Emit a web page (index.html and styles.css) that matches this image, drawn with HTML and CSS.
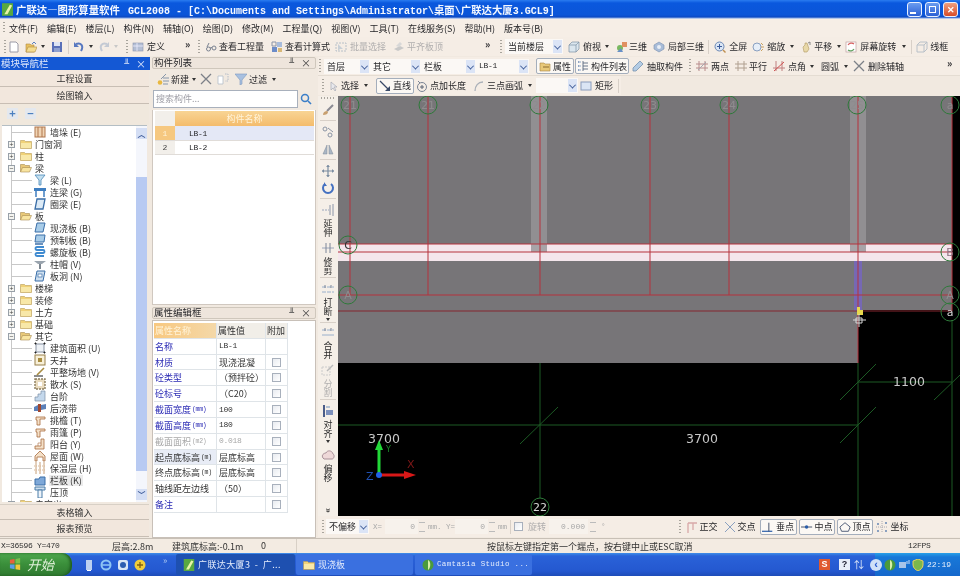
FILE: index.html
```html
<!DOCTYPE html>
<html lang="zh-CN">
<head>
<meta charset="utf-8">
<title>广联达—图形算量软件</title>
<link rel="stylesheet" href="styles.css">
</head>
<body>
<svg class="defs" xmlns="http://www.w3.org/2000/svg">
<symbol id="new" viewBox="0 0 12 12"><path d="M2 1h6l2 2v8H2z" fill="#fff" stroke="#9a9aa6"/></symbol>
<symbol id="open" viewBox="0 0 12 12"><path d="M1 3h4l1 1h3v7H1z" fill="#e8c060" stroke="#b08a40" stroke-width=".6"/><path d="M3 6h9l-2 5H1z" fill="#f4dc90" stroke="#b08a40" stroke-width=".6"/><path d="M7 3l2-2 2 2" fill="none" stroke="#5a80c0"/></symbol>
<symbol id="save" viewBox="0 0 12 12"><rect x="1" y="1" width="10" height="10" fill="#5a70b8"/><rect x="3" y="1" width="6" height="4" fill="#dde4f4"/><rect x="3" y="7" width="6" height="4" fill="#8ea0d0"/></symbol>
<symbol id="undo" viewBox="0 0 12 12"><path d="M3 3c5-2 8 2 5 7" fill="none" stroke="#5878c0" stroke-width="2"/><path d="M1 1v5h5z" fill="#5878c0"/></symbol>
<symbol id="redo" viewBox="0 0 12 12"><path d="M9 3C4 1 1 5 4 10" fill="none" stroke="#c4cad4" stroke-width="2"/><path d="M11 1v5H6z" fill="#c4cad4"/></symbol>
<symbol id="def" viewBox="0 0 12 12"><rect x="1" y="2" width="10" height="8" fill="#b4bed4" stroke="#8a94ac" stroke-width=".6"/><path d="M1 5h10M5 2v8" stroke="#eef" stroke-width=".8"/></symbol>
<symbol id="new2" viewBox="0 0 12 12"><circle cx="3" cy="9.500" r="2.300" fill="#e8b840"/><path d="M4 6l5-5M6 5h6M6 8h6M6 11h5" stroke="#7c8ca4" stroke-width=".9"/></symbol>
<symbol id="copy" viewBox="0 0 12 12"><path d="M1 3h5v8H1z" fill="#fff" stroke="#b4bcc8" stroke-width=".8"/><path d="M8 1h3v7H8" fill="none" stroke="#b4bcc8" stroke-dasharray="1.500 1"/></symbol>
<symbol id="glass" viewBox="0 0 12 12"><circle cx="3.500" cy="8" r="2" fill="none" stroke="#7a8290"/><circle cx="9" cy="7" r="2" fill="none" stroke="#7a8290"/><path d="M5 7l2-.5M2 6l2-4" stroke="#7a8290"/></symbol>
<symbol id="calc" viewBox="0 0 12 12"><rect x="1" y="6" width="5" height="5" fill="#6c8cc8"/><rect x="6" y="1" width="5" height="5" fill="#a8bcdc"/><rect x="7" y="7" width="4" height="4" fill="#d8b878"/><path d="M1 1h4v4H1z" fill="none" stroke="#8a94a8"/></symbol>
<symbol id="batch" viewBox="0 0 12 12"><path d="M1 2h10v8H1z" fill="none" stroke="#b8c0c8" stroke-dasharray="2 1"/><path d="M3 3l5 5H5l-2 2z" fill="#c8cfd6"/></symbol>
<symbol id="flat" viewBox="0 0 12 12"><path d="M1 8l6-3 4 2-6 3z" fill="#c8c8c8"/><path d="M3 5l4-4 2 2-3 3z" fill="#d8d8d8"/></symbol>
<symbol id="cube" viewBox="0 0 12 12"><path d="M1 4l3-3h7v7l-3 3H1z" fill="#dbe6ee" stroke="#7c90a4" stroke-width=".7"/><path d="M1 4h7v7M8 4l3-3" fill="none" stroke="#7c90a4" stroke-width=".7"/></symbol>
<symbol id="tri" viewBox="0 0 12 12"><circle cx="4" cy="7" r="3" fill="#7ab860"/><path d="M6 1h5v5H6z" fill="#e09060"/><path d="M1 11l4-4 2 4z" fill="#6890c8"/></symbol>
<symbol id="local" viewBox="0 0 12 12"><path d="M6 1l5 3v4l-5 3-5-3V4z" fill="#a8bcd8" stroke="#7a90b0" stroke-width=".6"/><circle cx="6" cy="6" r="2" fill="#e8eef6"/></symbol>
<symbol id="fit" viewBox="0 0 12 12"><circle cx="5.500" cy="5.500" r="4.500" fill="#dbe6f4" stroke="#6c88b4"/><path d="M5.500 3v5M3 5.500h5" stroke="#3c5c9c"/><path d="M9 9l2.500 2.500" stroke="#c09050" stroke-width="1.400"/></symbol>
<symbol id="zoom" viewBox="0 0 12 12"><circle cx="5" cy="6" r="4" fill="#e6eef8" stroke="#8aa0c0"/><path d="M9 2l2 2M9 6h3M9 10l2-2" stroke="#c8a060"/></symbol>
<symbol id="pan" viewBox="0 0 12 12"><path d="M3 6l2-2v-2l2 0 1 3 1 3-2 3H4z" fill="#e8d8a8" stroke="#b09860" stroke-width=".6"/><path d="M8 2l2-1v3" fill="none" stroke="#8a8a8a"/></symbol>
<symbol id="rot" viewBox="0 0 12 12"><rect x="1" y="1" width="10" height="10" fill="#fff" stroke="#c0a0a0" stroke-width=".7"/><path d="M3 4a4 4 0 016-1" fill="none" stroke="#d86060" stroke-width="1.200"/><path d="M9 8a4 4 0 01-6 1" fill="none" stroke="#60a060" stroke-width="1.200"/></symbol>
<symbol id="wire" viewBox="0 0 12 12"><path d="M1 4l3-3h7v7l-3 3H1zM1 4h7v7M8 4l3-3" fill="none" stroke="#b8c0c8"/></symbol>
<symbol id="prop" viewBox="0 0 12 12"><path d="M1 3h4l1 1h5v7H1z" fill="#e8c878" stroke="#a88440" stroke-width=".6"/><path d="M4 7h6" stroke="#8a6a30"/></symbol>
<symbol id="list" viewBox="0 0 12 12"><path d="M1 2h3M1 6h3M1 10h3" stroke="#6c88b4" stroke-width="1.500" stroke-dasharray="1 .5"/><path d="M6 1v10M6 3h5M6 6h5M6 9h5" stroke="#5a6a80" stroke-width=".9"/></symbol>
<symbol id="pick" viewBox="0 0 12 12"><path d="M8 1l3 3-7 7H1V8z" fill="#b4cce4" stroke="#6a88a8" stroke-width=".7"/></symbol>
<symbol id="twop" viewBox="0 0 12 12"><path d="M3 1v10M9 1v10M0 4h12M0 8h12" stroke="#b88c8c"/><path d="M2 10l8-8" stroke="#a8a8b0"/></symbol>
<symbol id="par" viewBox="0 0 12 12"><path d="M3 1v10M9 1v10M0 4h12M0 8h12" stroke="#b0a090"/></symbol>
<symbol id="ang" viewBox="0 0 12 12"><path d="M3 1v10M9 1v10M0 8h12" stroke="#c08080"/><path d="M1 11L11 2" stroke="#d05050"/></symbol>
<symbol id="x" viewBox="0 0 12 12"><path d="M1 1l10 10M11 1L1 11" stroke="#7c8088" stroke-width="1.300"/></symbol>
<symbol id="sel" viewBox="0 0 12 12"><path d="M3 2v8l2-2 2 3 1-1-2-3h3z" fill="#e8e8ec" stroke="#a8aab4" stroke-width=".7"/></symbol>
<symbol id="line" viewBox="0 0 12 12"><path d="M1 1l9 9" stroke="#3a4a68" stroke-width="1.200"/><path d="M11 11H6l5-5z" fill="#3a4a68"/></symbol>
<symbol id="ptlen" viewBox="0 0 12 12"><circle cx="6" cy="7" r="4.500" fill="none" stroke="#7a8494"/><path d="M6 5v4M4 7h4" stroke="#5a6474"/><path d="M2 1l2 2" stroke="#7a8494"/></symbol>
<symbol id="arc" viewBox="0 0 12 12"><path d="M2 11C2 6 5 2 10 2" fill="none" stroke="#aab0b8" stroke-width="1.300"/></symbol>
<symbol id="rect" viewBox="0 0 12 12"><rect x="1" y="2" width="10" height="8" fill="#dbe5f4" stroke="#8a9cbc"/></symbol>
<symbol id="brush" viewBox="0 0 12 12"><path d="M11 1L5 7" stroke="#8a8a92" stroke-width="2"/><path d="M1 11c0-3 2-4 4-4l1 1c0 2-2 3-5 3z" fill="#c8a070"/></symbol>
<symbol id="sci" viewBox="0 0 12 12"><circle cx="3" cy="3" r="2" fill="none" stroke="#8a94a4"/><circle cx="8" cy="9" r="2" fill="none" stroke="#8a94a4"/><path d="M6 2l5 4" stroke="#8a94a4"/></symbol>
<symbol id="mir" viewBox="0 0 12 12"><path d="M5 2L1 11h4zM7 2l4 9H7z" fill="#aab6c4" stroke="#7c8898" stroke-width=".5"/></symbol>
<symbol id="move" viewBox="0 0 12 12"><path d="M6 0v12M0 6h12" stroke="#7a8ca0" stroke-width="1.200"/><path d="M4 2l2-2 2 2zM4 10l2 2 2-2zM2 4L0 6l2 2zM10 4l2 2-2 2z" fill="#7a8ca0"/></symbol>
<symbol id="rotv" viewBox="0 0 12 12"><path d="M3 2a5 5 0 106 0" fill="none" stroke="#4470c0" stroke-width="2"/><path d="M2 0v4h3z" fill="#4470c0"/></symbol>
<symbol id="ext" viewBox="0 0 14 12"><path d="M1 6h7" stroke="#9aa6bc" stroke-width="1" stroke-dasharray="2 1"/><path d="M9 1v10M12 0v12" stroke="#8a94a8"/></symbol>
<symbol id="trim" viewBox="0 0 14 12"><path d="M1 6h12" stroke="#9aa6bc"/><path d="M5 1v10M9 1v10" stroke="#7c8698"/></symbol>
<symbol id="brk" viewBox="0 0 14 12"><path d="M1 4h12M1 9h12" stroke="#9ab0cc" stroke-dasharray="4 1"/><path d="M4 2v3M10 2v3" stroke="#7c8698"/></symbol>
<symbol id="mrg" viewBox="0 0 14 12"><path d="M1 9h12" stroke="#9ab0cc"/><path d="M1 4h12" stroke="#9ab0cc" stroke-dasharray="4 1"/><path d="M4 2v3M10 2v3" stroke="#7c8698"/></symbol>
<symbol id="spl" viewBox="0 0 14 12"><path d="M1 3h8v8H1z" fill="none" stroke="#ccc" stroke-dasharray="2 1"/><path d="M12 1L6 7" stroke="#bbb" stroke-width="1.500"/></symbol>
<symbol id="alg" viewBox="0 0 12 12"><path d="M2 0v12" stroke="#4a5c88" stroke-width="2"/><path d="M4 5h7v5H4z" fill="#7c90bc"/><path d="M4 2h4" stroke="#9ab0cc" stroke-width="1.500"/></symbol>
<symbol id="off" viewBox="0 0 14 12"><path d="M2 9c-2-3 1-5 3-5 1-3 6-3 7 1 2 1 1 5-1 5H3z" fill="#eed8d8" stroke="#a89098"/></symbol>
<symbol id="ortho" viewBox="0 0 12 12"><path d="M2 2v10M2 2h9M7 2v7" stroke="#d8a8a8" stroke-width="1.300"/></symbol>
<symbol id="cross" viewBox="0 0 12 12"><path d="M1 1l10 10M11 1L1 11" stroke="#8aa0c0"/></symbol>
<symbol id="perp" viewBox="0 0 14 12"><path d="M0 11h12" stroke="#2a5ca8" stroke-width="1.400"/><path d="M8 1v10" stroke="#2a3a58"/></symbol>
<symbol id="mid" viewBox="0 0 14 12"><path d="M0 6h13" stroke="#2a3a58"/><circle cx="6.500" cy="6" r="2" fill="#2a5ca8"/></symbol>
<symbol id="top" viewBox="0 0 14 12"><path d="M7 1l6 5-2 5H3L1 6z" fill="none" stroke="#3a4a68"/></symbol>
<symbol id="coord" viewBox="0 0 12 12"><path d="M1 2h2v2H1zM9 1h2v2H9zM1 9h2v2H1zM9 9h2v2H9z" fill="#8aa0c0"/><path d="M6 0v12M0 6h12" stroke="#a8a8b0" stroke-dasharray="1 1"/></symbol>
<symbol id="folder" viewBox="0 0 12 10"><path d="M.5 2.500V1.500h4l1 1h6v7H.5z" fill="#f0d278" stroke="#b89c58" stroke-width=".6"/><path d="M1 4h10v5H1z" fill="#f8e8a8"/></symbol>
<symbol id="folderopen" viewBox="0 0 12 10"><path d="M.5 9V1.500h4l1 1h4V5" fill="#e8c878" stroke="#a88c50" stroke-width=".6"/><path d="M.5 9l2-4.500h9L9.500 9z" fill="#f8e4a0" stroke="#a88c50" stroke-width=".6"/></symbol>
<symbol id="wall" viewBox="0 0 12 12"><rect x="1" y="1" width="10" height="10" fill="#f0d4b4" stroke="#b0764c"/><path d="M4 1v10M8 1v10" stroke="#b0764c"/></symbol>
<symbol id="beam" viewBox="0 0 12 12"><path d="M1 1h10L7 6v5H5V6z" fill="#c4e0f0" stroke="#4a88b8" stroke-width=".8"/></symbol>
<symbol id="lbeam" viewBox="0 0 12 12"><path d="M0 2h12v3H0z" fill="#3f7ec0"/><path d="M2 5v6M10 5v6" stroke="#3f7ec0" stroke-width="1.500"/></symbol>
<symbol id="rbeam" viewBox="0 0 12 12"><path d="M3 1h8l-2 10H1z" fill="#dceaf6" stroke="#3a6ea8" stroke-width="1.300"/></symbol>
<symbol id="slab" viewBox="0 0 12 12"><path d="M3 1h8l-2 9H1z" fill="#a8cce8" stroke="#3a6ea8"/></symbol>
<symbol id="pre" viewBox="0 0 12 12"><path d="M2 1h9l-1 7H1z" fill="#a8cce8" stroke="#3a6ea8"/><path d="M1 10h8" stroke="#3a6ea8" stroke-width="1.500"/></symbol>
<symbol id="spiral" viewBox="0 0 12 12"><path d="M10 1H3c-2 0-2 3 0 3h6c2 0 2 3 0 3H3c-2 0-2 3 0 3h7" fill="none" stroke="#3f8ad0" stroke-width="1.800"/></symbol>
<symbol id="cap" viewBox="0 0 12 12"><path d="M0 3h12L8 6H4z" fill="#9aa4ae"/><path d="M5 6h2v5H5z" fill="#7c8690"/></symbol>
<symbol id="hole" viewBox="0 0 12 12"><path d="M3 1h8l-2 10H1z" fill="#cfe0f0" stroke="#3a6ea8"/><rect x="4" y="4" width="4" height="3" fill="#fff" stroke="#3a6ea8" stroke-width=".7"/></symbol>
<symbol id="area" viewBox="0 0 12 12"><rect x="2" y="2" width="8" height="8" fill="#eef2f6" stroke="#8a94a4"/><path d="M1 1h1v1H1zM10 1h1v1h-1zM1 10h1v1H1zM10 10h1v1h-1z" stroke="#222"/></symbol>
<symbol id="well" viewBox="0 0 12 12"><rect x="1" y="1" width="10" height="10" fill="#f8f0d8" stroke="#98804c"/><rect x="4" y="4" width="4" height="4" fill="#a88c40"/></symbol>
<symbol id="level" viewBox="0 0 12 12"><path d="M0 10h9" stroke="#666" stroke-width="1.500"/><path d="M3 9l7-7" stroke="#a88c40" stroke-width="1.600"/></symbol>
<symbol id="apron" viewBox="0 0 12 12"><rect x="1" y="1" width="10" height="10" fill="#eadcc0" stroke="#8a7c5c" stroke-width="1.400" stroke-dasharray="2 1"/><rect x="4" y="4" width="4" height="4" fill="#fff"/></symbol>
<symbol id="step" viewBox="0 0 12 12"><path d="M1 11V7h3V4h3V1h4v10z" fill="#c4d8ec" stroke="#7c90a8" stroke-width=".7"/></symbol>
<symbol id="post" viewBox="0 0 12 12"><path d="M0 5l4-2v6H0z" fill="#5c80b8"/><path d="M4 2h3v8H4z" fill="#a04830"/><path d="M7 3l5-1v5l-5 1z" fill="#5c80b8"/></symbol>
<symbol id="eave" viewBox="0 0 12 12"><path d="M2 3h9v2H6v6H3V6H2z" fill="#f4e0c8" stroke="#a86c40" stroke-width=".8"/></symbol>
<symbol id="balc" viewBox="0 0 12 12"><path d="M7 1h3v10H1V8h6z" fill="#f4e0c8" stroke="#a86c40" stroke-width=".8"/><path d="M4 8V5h3" fill="none" stroke="#a86c40" stroke-width=".6"/></symbol>
<symbol id="roof" viewBox="0 0 12 12"><path d="M1 11V6l5-5 5 5v5h-2V7H3v4z" fill="#f4e0c8" stroke="#a86c40" stroke-width=".8"/></symbol>
<symbol id="ins" viewBox="0 0 12 12"><path d="M2 0v12M6 0v12M10 0v12" stroke="#c8a078"/><path d="M0 4h12M0 8h12" stroke="#d8b898" stroke-dasharray="1 1"/></symbol>
<symbol id="para" viewBox="0 0 12 12"><path d="M1 5h4l1-2h5v8H1z" fill="#7ea8d8" stroke="#3a6ea8"/></symbol>
<symbol id="cop" viewBox="0 0 12 12"><path d="M1 1h10v3H1z" fill="#cfe0f0" stroke="#4a7ca8"/><path d="M4 4h4v8H4z" fill="#eef4fa" stroke="#4a7ca8"/></symbol>
<symbol id="ball" viewBox="0 0 12 12"><circle cx="6" cy="6" r="5.500" fill="#4a9a3c"/><path d="M6 1c3 1 3 8 0 10" fill="#d8f0a8"/></symbol>
</svg>
<div class="app">
  <header class="title">
    <svg class="logo" viewBox="0 0 14 16"><rect width="14" height="16" fill="#58a840"/><path d="M3 14L10 2l3 1-6 11z" fill="#e8f4a8"/></svg>
    <span class="cap">广联达—图形算量软件</span>
    <span class="capm">GCL2008 - [C:\Documents and Settings\Administrator\<span class="cap">桌面</span>\<span class="cap">广联达大厦</span>3.GCL9]</span>
    <span class="winbtns"><i class="wb"><b class="mn"></b></i><i class="wb"><b class="rs"></b></i><i class="wb wbx">✕</i></span>
  </header>
  <nav class="menu">
    <i class="grip"></i>
    <span>文件(F)</span><span>编辑(E)</span><span>楼层(L)</span><span>构件(N)</span><span>辅轴(O)</span><span>绘图(D)</span><span>修改(M)</span><span>工程量(Q)</span><span>视图(V)</span><span>工具(T)</span><span>在线服务(S)</span><span>帮助(H)</span><span>版本号(B)</span>
  </nav>
  <div class="tb tb1">
    <i class="grip m4"></i>
    <svg class="i m2"><use href="#new"/></svg><svg class="i m5"><use href="#open"/></svg><i class="ar m4"></i><svg class="i m6"><use href="#save"/></svg><i class="sp m5"></i>
    <svg class="i m4"><use href="#undo"/></svg><i class="ar m4"></i><svg class="i m5"><use href="#redo"/></svg><i class="ar m4 dim"></i>
    <i class="grip m8"></i><svg class="i m4"><use href="#def"/></svg><span class="m3">定义</span><em class="more m20">»</em><i class="grip m5"></i>
    <svg class="i m5"><use href="#glass"/></svg><span class="m2">查看工程量</span><svg class="i m7"><use href="#calc"/></svg><span class="m2">查看计算式</span>
    <svg class="i m5"><use href="#batch"/></svg><span class="m3 off">批量选择</span><svg class="i m7"><use href="#flat"/></svg><span class="m2 off">平齐板顶</span>
    <em class="more m42">»</em><i class="grip m7"></i>
    <span class="combo w58 m3">当前楼层<i class="dd"></i></span>
    <svg class="i m5"><use href="#cube"/></svg><span class="m3">俯视</span><i class="ar m4"></i>
    <svg class="i m7"><use href="#tri"/></svg><span class="m1">三维</span><svg class="i m6"><use href="#local"/></svg><span class="m3">局部三维</span><i class="sp m4"></i>
    <svg class="i m5"><use href="#fit"/></svg><span class="m3">全屏</span><svg class="i m5"><use href="#zoom"/></svg><span class="m3">缩放</span><i class="ar m5"></i>
    <svg class="i m6"><use href="#pan"/></svg><span class="m2">平移</span><i class="ar m5"></i><svg class="i m4"><use href="#rot"/></svg><span class="m3">屏幕旋转</span><i class="ar m6"></i><i class="sp m5"></i>
    <svg class="i m4"><use href="#wire"/></svg><span class="m2">线框</span>
  </div>
  <main class="main">
    <section class="left">
      <div class="phead blue"><span>模块导航栏</span><span class="pbtns"><b class="pin">╨</b><b>×</b></span></div>
      <div class="nbtn">工程设置</div>
      <div class="nbtn nb2">绘图输入</div>
      <div class="pm"><b>+</b><b>−</b></div>
      <div class="treewrap">
        <ul class="tree">
          <li class="l2"><svg class="i"><use href="#wall"/></svg><span>墙垛 (E)</span></li>
          <li class="l1"><i class="pl">+</i><svg class="f"><use href="#folder"/></svg><span>门窗洞</span></li>
          <li class="l1"><i class="pl">+</i><svg class="f"><use href="#folder"/></svg><span>柱</span></li>
          <li class="l1"><i class="pl">−</i><svg class="f"><use href="#folderopen"/></svg><span>梁</span></li>
          <li class="l2"><svg class="i"><use href="#beam"/></svg><span>梁 (L)</span></li>
          <li class="l2"><svg class="i"><use href="#lbeam"/></svg><span>连梁 (G)</span></li>
          <li class="l2"><svg class="i"><use href="#rbeam"/></svg><span>圈梁 (E)</span></li>
          <li class="l1"><i class="pl">−</i><svg class="f"><use href="#folderopen"/></svg><span>板</span></li>
          <li class="l2"><svg class="i"><use href="#slab"/></svg><span>现浇板 (B)</span></li>
          <li class="l2"><svg class="i"><use href="#pre"/></svg><span>预制板 (B)</span></li>
          <li class="l2"><svg class="i"><use href="#spiral"/></svg><span>螺旋板 (B)</span></li>
          <li class="l2"><svg class="i"><use href="#cap"/></svg><span>柱帽 (V)</span></li>
          <li class="l2"><svg class="i"><use href="#hole"/></svg><span>板洞 (N)</span></li>
          <li class="l1"><i class="pl">+</i><svg class="f"><use href="#folder"/></svg><span>楼梯</span></li>
          <li class="l1"><i class="pl">+</i><svg class="f"><use href="#folder"/></svg><span>装修</span></li>
          <li class="l1"><i class="pl">+</i><svg class="f"><use href="#folder"/></svg><span>土方</span></li>
          <li class="l1"><i class="pl">+</i><svg class="f"><use href="#folder"/></svg><span>基础</span></li>
          <li class="l1"><i class="pl">−</i><svg class="f"><use href="#folderopen"/></svg><span>其它</span></li>
          <li class="l2"><svg class="i"><use href="#area"/></svg><span>建筑面积 (U)</span></li>
          <li class="l2"><svg class="i"><use href="#well"/></svg><span>天井</span></li>
          <li class="l2"><svg class="i"><use href="#level"/></svg><span>平整场地 (V)</span></li>
          <li class="l2"><svg class="i"><use href="#apron"/></svg><span>散水 (S)</span></li>
          <li class="l2"><svg class="i"><use href="#step"/></svg><span>台阶</span></li>
          <li class="l2"><svg class="i"><use href="#post"/></svg><span>后浇带</span></li>
          <li class="l2"><svg class="i"><use href="#eave"/></svg><span>挑檐 (T)</span></li>
          <li class="l2"><svg class="i"><use href="#eave"/></svg><span>雨篷 (P)</span></li>
          <li class="l2"><svg class="i"><use href="#balc"/></svg><span>阳台 (Y)</span></li>
          <li class="l2"><svg class="i"><use href="#roof"/></svg><span>屋面 (W)</span></li>
          <li class="l2"><svg class="i"><use href="#ins"/></svg><span>保温层 (H)</span></li>
          <li class="l2"><svg class="i"><use href="#para"/></svg><span class="hl">栏板 (K)</span></li>
          <li class="l2"><svg class="i"><use href="#cop"/></svg><span>压顶</span></li>
          <li class="l1 clip"><i class="pl">+</i><svg class="f"><use href="#folder"/></svg><span>自定义</span></li>
        </ul>
        <div class="vsb"><i class="sba">︿</i><i class="sbgap"></i><i class="sbt"></i><i class="sbgap2"></i><i class="sba">﹀</i></div>
      </div>
      <div class="nbtn nb3">表格输入</div>
      <div class="nbtn">报表预览</div>
    </section>
    <section class="mid">
      <div class="phead"><span>构件列表</span><span class="pbtns"><b class="pin">╨</b><b>×</b></span></div>
      <div class="mtb">
        <svg class="i"><use href="#new2"/></svg><span class="m2">新建</span><i class="ar m3"></i><svg class="i m4"><use href="#x"/></svg><svg class="i m5"><use href="#copy"/></svg>
        <svg class="i m6" viewBox="0 0 12 12"><path d="M0 1h12L7 7v4L5 12V7z" fill="#a8c0e0" stroke="#7c98c0" stroke-width=".6"/></svg><span class="m2">过滤</span><i class="ar m5"></i>
      </div>
      <div class="search"><span class="sinp">搜索构件...</span><svg class="sbtn" viewBox="0 0 12 12"><circle cx="5" cy="5" r="3.500" fill="none" stroke="#3a7ec8" stroke-width="1.500"/><path d="M8 8l3 3" stroke="#3a7ec8" stroke-width="1.600"/></svg></div>
      <div class="listbox">
        <div class="lt">
          <span class="lh0"></span><span class="lh">构件名称</span>
          <span class="lno on">1</span><span class="lv on2">LB-1</span>
          <span class="lno">2</span><span class="lv">LB-2</span>
        </div>
      </div>
      <div class="phead ph2"><span>属性编辑框</span><span class="pbtns"><b class="pin">╨</b><b>×</b></span></div>
      <div class="propbox">
        <div class="pt">
          <span class="th0">属性名称</span><span class="th">属性值</span><span class="th">附加</span>
          <span class="k">名称</span><span class="v mono">LB-1</span><span class="c"></span>
          <span class="k">材质</span><span class="v">现浇混凝</span><span class="c"><i class="cb"></i></span>
          <span class="k">砼类型</span><span class="v">（预拌砼）</span><span class="c"><i class="cb"></i></span>
          <span class="k">砼标号</span><span class="v">（C20）</span><span class="c"><i class="cb"></i></span>
          <span class="k">截面宽度<small>(mm)</small></span><span class="v mono">100</span><span class="c"><i class="cb"></i></span>
          <span class="k">截面高度<small>(mm)</small></span><span class="v mono">180</span><span class="c"><i class="cb"></i></span>
          <span class="k gr">截面面积<small>(m2)</small></span><span class="v mono gr">0.018</span><span class="c"><i class="cb"></i></span>
          <span class="k bk sh">起点底标高<small>(m)</small></span><span class="v">层底标高</span><span class="c"><i class="cb"></i></span>
          <span class="k bk">终点底标高<small>(m)</small></span><span class="v">层底标高</span><span class="c"><i class="cb"></i></span>
          <span class="k bk">轴线距左边线</span><span class="v">（50）</span><span class="c"><i class="cb"></i></span>
          <span class="k">备注</span><span class="v"></span><span class="c"><i class="cb"></i></span>
        </div>
      </div>
    </section>
    <section class="right">
      <div class="tb tb2">
        <i class="grip m1"></i>
        <span class="combo w46 m3">首层<i class="dd"></i></span><span class="combo w51">其它<i class="dd"></i></span><span class="combo w55">栏板<i class="dd"></i></span><span class="combo w53 mono">LB-1<i class="dd"></i></span>
        <span class="tbtn w38 m7"><svg class="i"><use href="#prop"/></svg>属性</span><span class="tbtn w54 m1"><svg class="i"><use href="#list"/></svg>构件列表</span>
        <svg class="i m3"><use href="#pick"/></svg><span class="m3">抽取构件</span><i class="grip m6"></i>
        <svg class="i m5"><use href="#twop"/></svg><span class="m3">两点</span><svg class="i m6"><use href="#par"/></svg><span class="m2">平行</span><svg class="i m6"><use href="#ang"/></svg><span class="m3">点角</span><i class="ar m4"></i>
        <span class="m7">圆弧</span><i class="ar m5"></i><svg class="i m5"><use href="#x"/></svg><span class="m3">删除辅轴</span><em class="more m43">»</em>
      </div>
      <div class="tb3row">
        <div class="tb tb3">
          <i class="grip m4"></i><svg class="i m4"><use href="#sel"/></svg><span class="m1">选择</span><i class="ar m5"></i>
          <span class="tbtn w38 m8"><svg class="i"><use href="#line"/></svg>直线</span>
          <svg class="i m2"><use href="#ptlen"/></svg><span class="m2">点加长度</span><svg class="i m7"><use href="#arc"/></svg><span class="m2">三点画弧</span><i class="ar m5"></i>
          <span class="combo w42 m4"><i class="dd"></i></span><svg class="i m2"><use href="#rect"/></svg><span class="m3">矩形</span><i class="sp m5"></i>
        </div>
      </div>
      <div class="work">
        <div class="vtb">
          <i class="vgrip"></i>
          <svg class="vi"><use href="#brush"/></svg><i class="vsp"></i>
          <svg class="vi"><use href="#sci"/></svg><svg class="vi"><use href="#mir"/></svg><i class="vsp"></i>
          <svg class="vi"><use href="#move"/></svg><svg class="vi"><use href="#rotv"/></svg><i class="vsp"></i>
          <svg class="vi"><use href="#ext"/></svg><span class="vt">延伸</span>
          <svg class="vi vs"><use href="#trim"/></svg><span class="vt">修剪</span><i class="vsp"></i>
          <svg class="vi"><use href="#brk"/></svg><span class="vt">打断</span><i class="ar"></i><i class="vsp vsp2"></i>
          <svg class="vi"><use href="#mrg"/></svg><span class="vt">合并</span>
          <svg class="vi vs"><use href="#spl"/></svg><span class="vt off">分割</span><i class="vsp"></i>
          <svg class="vi"><use href="#alg"/></svg><span class="vt">对齐</span><i class="ar"></i>
          <svg class="vi vs"><use href="#off"/></svg><span class="vt">偏移</span>
          <em class="vmore">»</em>
        </div>
        <svg class="cad" viewBox="338 96 622 420" xmlns="http://www.w3.org/2000/svg">
          <rect x="338" y="96" width="622" height="420" fill="#000"/>
          <path d="M338 96H952V310H858V363H338z" fill="#777578"/>
          <path d="M531 96h16v164h-16zM850 96h16v164h-16z" fill="#918f92"/>
          <rect x="338" y="244" width="614" height="17" fill="#f4e6ec"/>
          <path d="M531 244h16v8h-16zM850 244h16v8h-16z" fill="#a8a4a8"/>
          <rect x="854" y="261" width="8" height="50" fill="#7668b4"/>
          <g stroke="#b5323c" fill="none">
            <path d="M350 96V295M428 96V295M540 96V295M650 96V295M729 96V295M858 96V363M952 96V311"/>
            <path d="M338 244H952M338 252H952M338 295H952"/>
          </g>
          <path d="M338 311H952" stroke="#85262e" fill="none"/>
          <g stroke="#1c5a24" fill="none">
            <path d="M338 425H858M540 363V498M858 363V516M952 320V516M858 382H952"/>
            <path d="M520 444L558 407M840 443L876 407M840 400L876 364M934 400L960 375"/>
          </g>
          <g fill="none" stroke="#2e7a3a">
            <circle cx="350" cy="105" r="9"/><circle cx="428" cy="105" r="9"/><circle cx="539" cy="105" r="9"/><circle cx="650" cy="105" r="9"/><circle cx="729" cy="105" r="9"/><circle cx="857" cy="105" r="9"/><circle cx="950" cy="105" r="9"/>
            <circle cx="348" cy="245" r="9"/><circle cx="348" cy="295" r="9"/><circle cx="950" cy="252" r="9"/><circle cx="950" cy="295" r="9"/><circle cx="950" cy="312" r="9"/><circle cx="540" cy="507" r="9"/>
          </g>
          <g class="bub">
            <text x="350" y="109">21</text><text x="428" y="109">21</text><text x="539" y="109">22</text><text x="650" y="109">23</text><text x="729" y="109">24</text><text x="857" y="109">25</text><text x="950" y="109">a</text>
            <text x="348" y="299" >A</text><text x="950" y="299">A</text>
          </g>
          <g class="bub wh">
            <text x="348" y="249" class="bk">C</text><text x="950" y="256" class="pk">B</text><text x="950" y="316">a</text><text x="540" y="511">22</text>
          </g>
          <g class="dim">
            <text x="384" y="443">3700</text><text x="702" y="443">3700</text><text x="909" y="386">1100</text>
          </g>
          <path d="M857 307h3v3h3v5h-6z" fill="#e8d84c"/>
          <path d="M853 320h13M859 314v13M856 318h6v5h-6z" stroke="#d8d8d8" fill="none"/>
          <path d="M379 475V450" stroke="#22d838" stroke-width="3"/><path d="M379 440l-4 10h8z" fill="#22d838"/>
          <path d="M379 475H405" stroke="#d81818" stroke-width="3"/><path d="M416 475l-12-4v8z" fill="#d81818"/>
          <circle cx="379" cy="475" r="3" fill="#2060e8"/>
          <g class="axis"><text x="366" y="480" fill="#2050b0">Z</text><text x="407" y="468" fill="#801818">X</text><text x="386" y="452" fill="#1a8a2a" class="ay">Y</text></g>
        </svg>
      </div>
      <div class="tb tb4">
        <i class="grip m4"></i><span class="combo w43 m2">不偏移<i class="dd"></i></span>
        <span class="lab m4 w11">X=</span><span class="num w33 m1">0</span><i class="spin m1"></i><span class="lab m3 w26">mm. Y=</span><span class="num w33 m1">0</span><i class="spin m1"></i><span class="lab m3 w9">mm</span><i class="sp m3"></i>
        <i class="cb m3"></i><span class="off m5">旋转</span><span class="num w39 m3">0.000</span><i class="spin m2"></i><span class="lab m5">°</span>
        <i class="grip m73"></i><svg class="i m5"><use href="#ortho"/></svg><span class="m2">正交</span><svg class="i m6"><use href="#cross"/></svg><span class="m2">交点</span>
        <span class="tbtn w37 m4"><svg class="i"><use href="#perp"/></svg>垂点</span><span class="tbtn w36 m2"><svg class="i"><use href="#mid"/></svg>中点</span><span class="tbtn w36 m2"><svg class="i"><use href="#top"/></svg>顶点</span>
        <svg class="i m3"><use href="#coord"/></svg><span class="m3">坐标</span>
      </div>
    </section>
  </main>
  <footer class="status">
    <span class="s1 mono">X=36596 Y=470</span><span class="s2">层高:2.8m</span><span class="s3">建筑底标高:-0.1m</span><span class="s4">0</span><span class="s5">按鼠标左键指定第一个端点，按右键中止或ESC取消</span><span class="s6 mono">12FPS</span>
  </footer>
  <div class="taskbar">
    <div class="start"><svg class="flag" viewBox="0 0 14 14"><path d="M1 2l5-1v5H1z" fill="#e8603c"/><path d="M7 1l5-1v6H7z" fill="#7cc04c"/><path d="M1 7h5v5l-5-1z" fill="#5c9ce8"/><path d="M7 7h5v6l-5-1z" fill="#f0c83c"/></svg><span>开始</span></div>
    <div class="ql">
      <svg class="q" viewBox="0 0 12 12"><rect x="3" y="1" width="6" height="10" fill="#bcd0f0"/><path d="M4 11h4v1H4z" fill="#fff"/></svg>
      <svg class="q" viewBox="0 0 12 12"><circle cx="6" cy="6" r="4.500" fill="none" stroke="#8ec4f4" stroke-width="2"/><path d="M1 6h10" stroke="#8ec4f4" stroke-width="1.500"/></svg>
      <svg class="q" viewBox="0 0 12 12"><rect x="1" y="1" width="10" height="10" rx="2" fill="#d8e4f4"/><circle cx="6" cy="6" r="3" fill="#2c5cb0"/></svg>
      <svg class="q" viewBox="0 0 12 12"><circle cx="6" cy="6" r="5.500" fill="#f0cc3c"/><path d="M6 3v6M3 6h6" stroke="#806010" stroke-width="1.300"/></svg>
      <em class="qm">»</em>
    </div>
    <div class="tk act"><svg class="q" viewBox="0 0 14 16"><rect width="14" height="16" fill="#58a840"/><path d="M3 14L10 2l3 1-6 11z" fill="#e8f4a8"/></svg><span class="tk1">广联达大厦3 - 广...</span></div>
    <div class="tk"><svg class="q" viewBox="0 0 12 10"><use href="#folder"/></svg><span>现浇板</span></div>
    <div class="tk tk3"><svg class="q"><use href="#ball"/></svg><span class="mono">Camtasia Studio ...</span></div>
    <div class="tray0">
      <span class="sg">S</span><span class="hp">?</span><span class="ud">⇅</span>
    </div>
    <div class="tray">
      <span class="back">‹</span><svg class="q"><use href="#ball"/></svg>
      <svg class="q" viewBox="0 0 12 12"><rect x="1" y="3" width="7" height="6" fill="#a8c4e8"/><path d="M9 2v3M11 1v4" stroke="#cfe0f8"/></svg>
      <svg class="q" viewBox="0 0 12 12"><path d="M6 0l5 2v4c0 3-3 5-5 6-2-1-5-3-5-6V2z" fill="#7cb84c" stroke="#e8d060"/></svg>
      <span class="clock">22:19</span>
    </div>
  </div>
</div>
</body>
</html>
```
FILE: styles.css
```css
* { box-sizing: border-box; }
html, body { margin: 0; padding: 0; background: #f3ebe2; }
.defs { width: 0; height: 0; display: block; overflow: hidden; }
i, em, b { font-style: normal; font-weight: normal; }
ul { margin: 0; padding: 0; list-style: none; }
.app { width: 960px; height: 576px; display: flex; flex-direction: column; overflow: hidden; background: #f1e9e0; color: #27272a; font: 9px/1 "Noto Sans CJK SC", sans-serif; filter: blur(.35px); }
.mono { font-family: "Liberation Mono", "Noto Sans CJK SC", monospace; font-size: 8px; letter-spacing: -.3px; }

.title { height: 19px; flex: none; display: flex; align-items: center; padding-left: 2px; color: #f4f8ff; background: linear-gradient(#2a7cf0 0, #0a58de 3px, #0b55d8 15px, #0b49c4 17px, #eef2f8 19px); }
.logo { width: 11px; height: 13px; margin-right: 3px; }
.cap { font: bold 10.4px "Noto Sans CJK SC", sans-serif; }
.capm { font: bold 10px "Liberation Mono", monospace; margin-left: 8px; white-space: nowrap; }
.winbtns { margin-left: auto; display: flex; gap: 3px; padding-right: 2px; }
.wb { width: 15px; height: 15px; border: 1px solid #e8f0ff; border-radius: 3px; background: linear-gradient(#6a9cf0, #2c60d4); color: #fff; display: flex; align-items: center; justify-content: center; font-size: 9px; }
.wbx { background: linear-gradient(#f0a080, #d84c28); font-weight: bold; }
.mn { width: 6px; height: 2px; background: #fff; margin-top: 7px; margin-right: 3px; }
.rs { width: 7px; height: 7px; border: 1px solid #fff; }

.menu { height: 18px; flex: none; display: flex; align-items: center; padding-left: 3px; gap: 9px; background: #f6eee6; }
.menu .grip { margin-right: -5px; height: 12px; }

.grip { width: 2px; height: 14px; flex: none; background: repeating-linear-gradient(#a8a49c 0 1px, transparent 1px 3px); }
.tb { display: flex; align-items: center; white-space: nowrap; background: #f5ede5; }
.tb1 { height: 19px; flex: none; }
.i { width: 12px; height: 12px; flex: none; display: block; }
.ar { width: 0; height: 0; flex: none; border: 2.5px solid transparent; border-top: 3px solid #333; border-bottom: 0; }
.ar.dim { border-top-color: #c8c8c8; }
.sp { width: 1px; height: 14px; flex: none; background: #d8d0c8; }
.more { width: 8px; flex: none; font-size: 10px; font-weight: bold; margin-top: -6px; }
.off { color: #b0aeae; }
.m1 { margin-left: 1px; } .m2 { margin-left: 2px; } .m3 { margin-left: 3px; } .m4 { margin-left: 4px; } .m5 { margin-left: 5px; } .m6 { margin-left: 6px; } .m7 { margin-left: 7px; } .m8 { margin-left: 8px; } .m20 { margin-left: 20px; } .m42 { margin-left: 42px; } .m43 { margin-left: 43px; } .m73 { margin-left: 73px; }
.w11 { width: 11px; } .w26 { width: 26px; } .w9 { width: 9px; } .w33 { width: 33px; } .w36 { width: 36px; } .w37 { width: 37px; } .w38 { width: 38px; } .w39 { width: 39px; } .w42 { width: 42px; } .w43 { width: 43px; } .w46 { width: 46px; } .w51 { width: 51px; } .w53 { width: 53px; } .w54 { width: 54px; } .w55 { width: 55px; } .w58 { width: 58px; }
.combo { height: 15px; flex: none; background: #fbf8f5; display: flex; align-items: center; justify-content: space-between; padding: 0 1px 0 3px; }
.dd { width: 9px; height: 13px; flex: none; margin-left: auto; background: #dbe4f6; position: relative; }
.dd::after { content: ""; position: absolute; left: 2px; top: 5px; width: 4px; height: 4px; border-right: 1.500px solid #3c5a98; border-bottom: 1.500px solid #3c5a98; transform: rotate(45deg) translate(-1px, -1px); }
.tbtn { height: 16px; flex: none; display: flex; align-items: center; justify-content: center; gap: 2px; background: #fbf8f4; border: 1px solid #a4aebc; border-radius: 2px; }

.main { height: 482px; flex: none; display: flex; }
.left { width: 150px; flex: none; display: flex; flex-direction: column; padding-top: 1px; }
.phead { height: 12px; flex: none; display: flex; align-items: center; justify-content: space-between; padding: 0 4px 0 1px; border: 1px solid #cfc7bc; border-radius: 2px; background: #eee5dc; font-size: 9.5px; }
.phead.blue { height: 13px; background: #1458d4; color: #dfe8fb; border: 0; border-radius: 0; }
.pbtns { display: flex; gap: 7px; font-size: 10px; color: #444; }
.pin { font: bold 8px "DejaVu Sans", sans-serif; }
.blue .pbtns { color: #dfe8fb; }
.nbtn { height: 17px; flex: none; display: flex; align-items: center; justify-content: center; background: #f2e7dd; border-bottom: 1px solid #c8beb4; color: #333; margin-right: 1px; }
.nbtn:first-of-type { height: 16px; }
.nb3 { height: 16px; margin-top: 2px; border-top: 1px solid #d8d0c6; }
.pm { height: 21px; flex: none; display: flex; gap: 7px; padding: 4px 0 0 7px; background: #f0e8dd; margin-right: 1px; }
.pm b { width: 11px; height: 11px; display: flex; align-items: center; justify-content: center; background: #e4e8ee; color: #4c80c0; font-size: 11px; font-weight: bold; }
.treewrap { height: 377px; flex: none; display: flex; margin-left: 2px; margin-right: 3px; background: #fff; border-top: 1px solid #b4bec4; overflow: hidden; }
.tree { flex: 1; min-width: 0; background: linear-gradient(#c8c8c8, #c8c8c8) 9px 0 / 1px 100% no-repeat; }
.tree li { height: 12px; display: flex; align-items: center; color: #333; white-space: nowrap; }
.l1 { padding-left: 6px; }
.l2 { padding-left: 32px; background: linear-gradient(#c8c8c8, #c8c8c8) 10px 6px / 20px 1px no-repeat; }
.l2 span { margin-left: 3px; padding: 1px; }
.l1 span { margin-left: 3px; }
.pl { width: 7px; height: 7px; flex: none; border: 1px solid #98a0a8; background: #f4f4f0; font-size: 7px; line-height: 5px; text-align: center; color: #444; }
.f { width: 12px; height: 10px; flex: none; margin-left: 5px; }
.hl { background: #ececec; }
.vsb { width: 11px; flex: none; display: flex; flex-direction: column; background: #f4f6fc; }
.sba { height: 11px; flex: none; margin: 2px 0; background: #d4def4; color: #3c5a98; font-size: 8px; font-weight: bold; display: flex; align-items: center; justify-content: center; }
.sbgap { height: 36px; flex: none; }
.sbt { height: 294px; flex: none; background: #b8caf2; }
.sbgap2 { flex: 1; }

.mid { width: 164px; flex: none; margin-left: 2px; display: flex; flex-direction: column; padding-top: 1px; }
.mtb { height: 20px; flex: none; display: flex; align-items: center; padding-left: 5px; background: #f1e9e0; }
.search { height: 20px; flex: none; display: flex; align-items: center; padding-bottom: 1px; }
.sinp { width: 145px; height: 18px; flex: none; margin-left: 1px; display: flex; align-items: center; padding-left: 2px; background: #fff; border: 1px solid #a8b0bc; color: #a0a0a8; }
.sbtn { width: 12px; height: 12px; margin-left: 2px; }
.listbox { height: 195px; flex: none; margin-top: 1px; background: #fff; border: 1px solid #d0c8c0; border-top: 0; padding: 1px 2px 0; }
.lt { display: grid; grid-template-columns: 20px 139px; grid-template-rows: 15px 15px 14px; }
.lh0 { background: #f2efea; }
.lh { background: linear-gradient(#f8d494, #f4bc6c); color: #fff3d8; display: flex; align-items: center; justify-content: center; }
.lno { display: flex; align-items: center; justify-content: center; background: #f2efea; border-bottom: 1px solid #e0dcd8; color: #444; font: 8px "Liberation Mono", monospace; }
.lno.on { background: #f6c880; color: #fff3d8; }
.lv { display: flex; align-items: center; padding-left: 14px; border-bottom: 1px solid #e0dcd8; font: 8px "Liberation Mono", monospace; letter-spacing: -.3px; }
.on2 { background: #e4e8f6; }
.ph2 { margin-top: 2px; }
.propbox { flex: 1; margin-top: 1px; background: #fff; border: 1px solid #c8c0b8; padding: 2px 0 0 1px; }
.pt { display: grid; grid-template-columns: 63px 49px 22px; grid-auto-rows: 15.83px; }
.pt > span { display: flex; align-items: center; border-bottom: 1px solid #dfe4e8; border-right: 1px solid #dfe4e8; white-space: nowrap; padding-left: 1px; overflow: hidden; }
.pt small { font: 6.5px "Liberation Mono", monospace; margin-left: 1px; letter-spacing: -.3px; }
.th0 { background: linear-gradient(90deg, #f8c880, #f4d8a8); color: #fff3d8; }
.th { background: #f1eee8; color: #333; }
.k { color: #2a2ab4; }
.k.gr, .gr { color: #a8a8a8; }
.k.bk { color: #333; }
.sh { background: #e8ecf6; }
.pt .v { padding-left: 2px; color: #333; }
.pt .v.gr { color: #a8a8a8; }
.pt .c { justify-content: center; padding: 0; }
.cb { width: 9px; height: 9px; flex: none; display: block; border: 1px solid #a8b0bc; background: linear-gradient(135deg, #e8ebf0, #fff); }

.right { flex: 1; min-width: 0; margin-left: 2px; display: flex; flex-direction: column; padding-top: 1px; }
.tb2 { height: 19px; flex: none; border-bottom: 1px solid #e4dcd2; }
.tb3row { height: 20px; flex: none; display: flex; background: #f1e9e0; }
.tb3 { width: 303px; height: 19px; }
.work { height: 420px; flex: none; display: flex; }
.vtb { width: 20px; flex: none; display: flex; flex-direction: column; align-items: center; background: #f5efe8; padding-top: 1px; color: #2a2a2a; overflow: hidden; }
.vgrip { width: 14px; height: 2px; flex: none; margin-bottom: 2px; background: repeating-linear-gradient(90deg, #a8a49c 0 1px, transparent 1px 3px); }
.vi { width: 14px; height: 12px; flex: none; margin-top: 3px; margin-bottom: 2px; }
.vs { margin-top: 5px; }
.vsp { width: 16px; height: 1px; flex: none; background: #d8d0c8; margin: 2px 0; }
.vsp2 { margin: 0; }
.vt { writing-mode: vertical-rl; text-orientation: upright; font-size: 9px; flex: none; margin-top: 1px; letter-spacing: 0; line-height: 9px; }
.vtb .ar { margin: 2px 0 1px; }
.vmore { margin-top: auto; margin-bottom: 1px; font-size: 9px; font-weight: bold; transform: rotate(90deg); }
.cad { width: 622px; height: 420px; flex: none; display: block; }
.bub text { text-anchor: middle; font: 11px "DejaVu Sans", sans-serif; fill: #8e8c8e; }
.bub.wh text { fill: #d8d8d8; }
.bub.wh .bk { fill: #333; }
.bub.wh .pk { fill: #8a7080; }
.dim text { text-anchor: middle; font: 12.500px "DejaVu Sans", sans-serif; fill: #c8c8c8; }
.axis text { font: 11px "DejaVu Sans", sans-serif; }
.axis .ay { font-size: 8px; }
.tb4 { height: 21px; flex: none; margin-top: 0; }
.lab { flex: none; color: #a8a8a8; font: 7.500px "Liberation Mono", monospace; }
.num { height: 15px; flex: none; display: flex; align-items: center; justify-content: flex-end; padding-right: 3px; background: #f7f2ec; color: #a8a8a8; font: 8px "Liberation Mono", monospace; }
.spin { width: 6px; height: 10px; flex: none; border-top: 1px solid #bbb; border-bottom: 1px solid #bbb; }

.status { height: 15px; flex: none; display: flex; align-items: center; background: #f3ebe2; border-top: 1px solid #c8c0b6; white-space: nowrap; color: #333; }
.s1 { width: 112px; padding-left: 1px; }
.s2 { width: 60px; }
.s3 { width: 89px; }
.s4 { width: 36px; border-right: 1px solid #d8d0c6; height: 14px; line-height: 13px; }
.s5 { margin-left: 2px; padding-left: 188px; width: 610px; }
.s6 { margin-left: -1px; }

.taskbar { height: 23px; flex: none; display: flex; align-items: center; background: linear-gradient(#3f8ee8 0, #2a62d8 3px, #2458d0 18px, #1e4cb8 23px); color: #e8f0fc; }
.start { width: 72px; height: 23px; flex: none; display: flex; align-items: center; gap: 5px; padding-left: 9px; border-radius: 0 10px 10px 0; background: linear-gradient(#4ea84e, #3a8e3a 50%, #2f7a30); box-shadow: inset -2px 0 3px #205c20; color: #dff0d8; font-size: 13.500px; font-style: italic; }
.flag { width: 13px; height: 13px; flex: none; }
.ql { width: 104px; flex: none; display: flex; align-items: center; gap: 5px; padding-left: 11px; }
.q { width: 12px; height: 12px; flex: none; display: block; }
.qm { font-size: 9px; margin-left: 12px; margin-top: -8px; color: #a8c4f0; }
.tk { width: 117px; height: 21px; flex: none; display: flex; align-items: center; gap: 3px; padding-left: 7px; margin-right: 2px; background: #3a70e0; border-radius: 2px; white-space: nowrap; color: #e4ecfc; }
.tk.act { background: #1e50b0; width: 119px; padding-left: 7px; margin-right: 1px; }
.tk1 { letter-spacing: .4px; word-spacing: 2px; }
.tk3 { margin-right: 0; }
.tk3 .mono { font-size: 7.500px; letter-spacing: .35px; }
.tray0 { flex: 1; display: flex; align-items: center; justify-content: flex-end; gap: 4px; padding-right: 13px; }
.sg { width: 11px; height: 11px; margin-right: 5px; background: #e05a30; color: #fff; font: bold 9px/11px "Liberation Sans", sans-serif; text-align: center; }
.hp { width: 11px; height: 11px; background: #e8eef8; color: #223; font: bold 9px/11px "Liberation Sans", sans-serif; text-align: center; }
.ud { width: 8px; font-size: 10px; color: #dfe8f8; }
.tray { width: 85px; height: 23px; flex: none; display: flex; align-items: center; gap: 2px; background: linear-gradient(#28a0e8, #1878d8 4px, #1568cc); }
.back { width: 12px; height: 12px; flex: none; margin-left: -5px; border-radius: 6px; background: #cfe0f8; color: #2458d0; font: bold 11px/10px "Liberation Sans", sans-serif; text-align: center; }
.clock { margin-left: 1px; font: 8px "Liberation Mono", monospace; color: #e8f0fc; }
```
